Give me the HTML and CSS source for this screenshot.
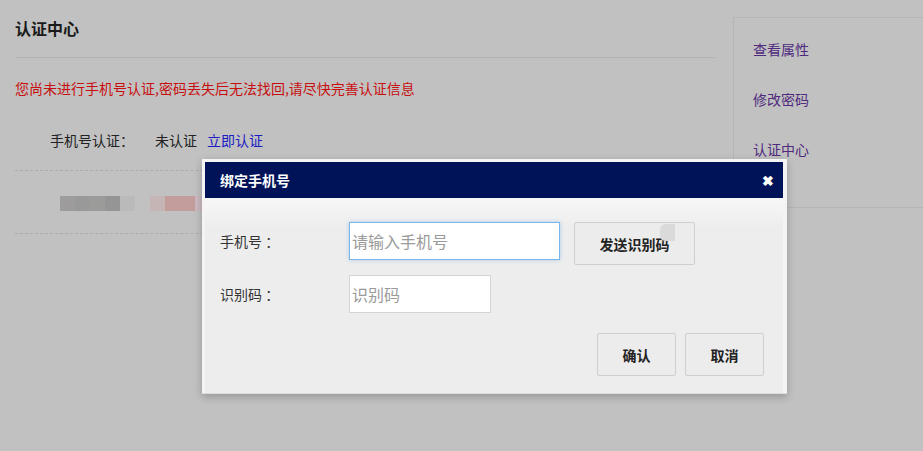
FILE: index.html
```html
<!DOCTYPE html>
<html>
<head>
    <title>认证中心</title>
    <link rel="stylesheet" href="styles.css">
</head>
<body>
    <div id="page">
        <div id="content">
            <h2 class="page-title">认证中心</h2>
            <p class="warn">您尚未进行手机号认证,密码丢失后无法找回,请尽快完善认证信息</p>
            <div class="auth-row">
                <span class="auth-label">手机号认证：</span>
                <span class="auth-state">未认证</span>
                <a class="auth-link" href="#">立即认证</a>
            </div>
            <div class="auth-row masked">
                <!-- pixelated phone number -->
                <span class="px" style="background:#9d9b9b"></span>
                <span class="px" style="background:#9a9999"></span>
                <span class="px" style="background:#9b9b9a"></span>
                <span class="px" style="background:#959595"></span>
                <span class="px" style="background:#bababa"></span>
                <span class="px" style="background:#c1c1c1"></span>
                <span class="px" style="background:#c5b5b5"></span>
                <span class="px" style="background:#c39c9c"></span>
                <span class="px" style="background:#c39c9c"></span>
                <span class="px" style="background:#cbb8c0"></span>
            </div>
        </div>
        <div id="side-menu">
            <div class="side-item">查看属性</div>
            <div class="side-item">修改密码</div>
            <div class="side-item">认证中心</div>
        </div>
    </div>

    <div id="dialog">
        <div class="dialog-head">
            <span class="dialog-title">绑定手机号</span>
            <span class="dialog-close">&#10006;</span>
        </div>
        <div class="dialog-body">
            <div class="form-row first">
                <label class="form-label">手机号 ：</label>
                <input class="form-input phone focus" type="text" placeholder="请输入手机号">
                <button class="btn send">发送识别码<span class="btn-blip"></span></button>
            </div>
            <div class="form-row">
                <label class="form-label">识别码 ：</label>
                <input class="form-input code" type="text" placeholder="识别码">
            </div>
            <div class="dialog-foot">
                <button class="btn">确认</button>
                <button class="btn">取消</button>
            </div>
        </div>
    </div>
</body>
</html>
```
FILE: styles.css
```css
body {
    font-family: "Noto Sans CJK SC", "Liberation Sans", sans-serif;
    margin: 0;
    padding: 0;
    background-color: #c1c1c1;
    color: #222;
    font-size: 14px;
    overflow: hidden;
    height: 451px;
}
#page {
    display: flex;
    flex-direction: row;
    align-items: flex-start;
}
#content {
    width: 700px;
    flex-shrink: 0;
    margin-left: 15px;
}
.page-title {
    margin: 0;
    padding: 16px 0 17px;
    font-size: 16px;
    line-height: 24px;
    font-weight: bold;
    color: #1a1a1a;
    border-bottom: 1px solid #b4b4b4;
}
.warn {
    margin: 20px 0 0;
    line-height: 20px;
    color: #c80f0f;
}
.auth-row {
    height: 60px;
    line-height: 60px;
    padding-left: 35px;
    border-bottom: 1px dashed #acacac;
    margin-top: 12px;
    display: flex;
}
.auth-label {
    width: 105px;
    color: #222;
}
.auth-state {
    color: #222;
}
.auth-link {
    margin-left: 10px;
    color: #1c1cc4;
    text-decoration: none;
}
.auth-row.masked {
    margin-top: 0;
    height: 62px;
    padding-left: 45px;
    align-items: center;
}
.px {
    display: inline-block;
    width: 15px;
    height: 15px;
    margin-top: 2px;
}
#side-menu {
    flex: 1;
    margin-left: 18px;
    margin-top: 17px;
    border: 1px solid #b5b5b5;
    border-right: none;
    padding: 6px 0 33px 19px;
}
.side-item {
    height: 50px;
    line-height: 50px;
    color: #4f2a7e;
}
#dialog {
    position: absolute;
    left: 202px;
    top: 159px;
    width: 578px;
    height: 231px;
    padding: 3px 4px 0 3px;
    background-color: #f4f4f4;
    box-shadow: 0 3px 8px rgba(0, 0, 0, 0.22);
    border-bottom: 1px solid #dcdcdc;
}
.dialog-head {
    height: 36px;
    background-color: #001359;
    color: white;
    display: flex;
    align-items: center;
    justify-content: space-between;
    padding: 0 9px 0 15px;
}
.dialog-title {
    font-weight: bold;
    font-size: 14px;
}
.dialog-close {
    font-size: 14px;
    font-weight: bold;
    line-height: 14px;
}
.dialog-body {
    height: 195px;
    box-sizing: border-box;
    padding: 24px 19px 0 15px;
    background: linear-gradient(#f7f7f7, #ededed 30px);
}
.form-row {
    display: flex;
    align-items: flex-start;
    margin-bottom: 15px;
}
.form-row.first {
    height: 42px;
    margin-bottom: 11px;
}
.form-label {
    width: 129px;
    line-height: 38px;
    color: #333;
}
.form-input {
    box-sizing: border-box;
    height: 38px;
    border: 1px solid #d4d4d4;
    background-color: white;
    padding: 0 2px;
    font-family: inherit;
    font-size: 16px;
    color: #333;
    outline: none;
}
.form-input::placeholder {
    color: #9a9a9a;
}
.form-input.phone {
    width: 211px;
}
.form-input.code {
    width: 142px;
}
.form-input.focus {
    border-color: #7ab5ea;
    box-shadow: 0 0 4px rgba(100, 160, 225, 0.45);
}
.btn {
    position: relative;
    box-sizing: border-box;
    width: 79px;
    height: 43px;
    border: 1px solid #cfcfcf;
    border-radius: 2px;
    background-color: #ececec;
    font-family: inherit;
    font-size: 14px;
    font-weight: bold;
    color: #222;
    padding: 0;
    cursor: pointer;
}
.btn.send {
    width: 121px;
    margin-left: 14px;
}
.btn-blip {
    position: absolute;
    left: 85px;
    top: 1px;
    width: 15px;
    height: 17px;
    border-radius: 6px 0 0 6px;
    background-color: #dadada;
}
.dialog-foot {
    margin-top: 20px;
    display: flex;
    justify-content: flex-end;
    gap: 9px;
}
```
